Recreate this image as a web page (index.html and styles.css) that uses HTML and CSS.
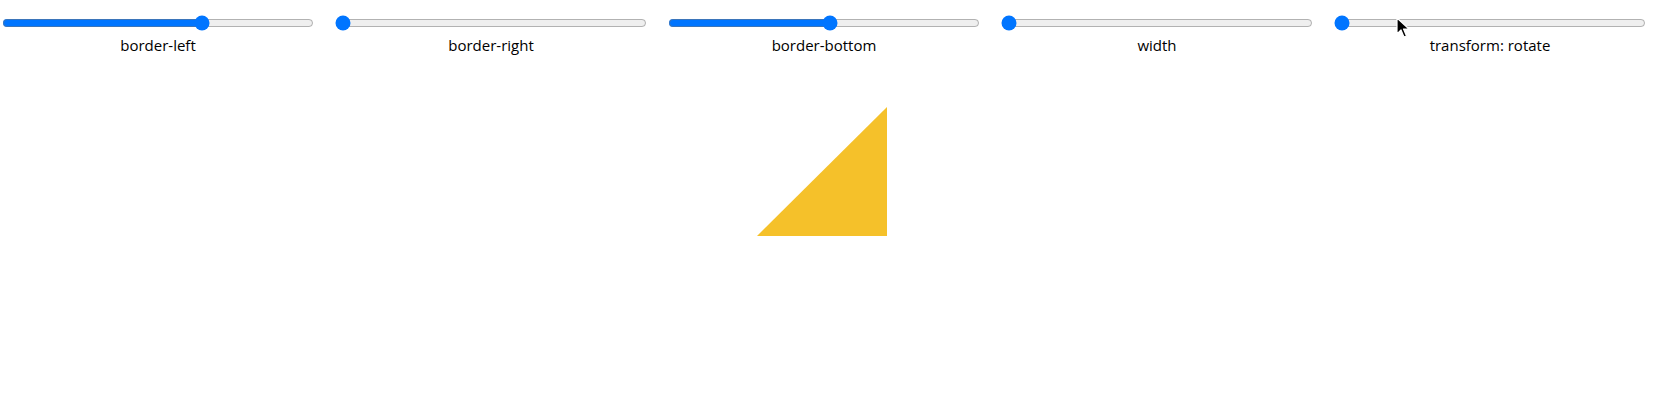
FILE: index.html
```html
<!DOCTYPE html>
<html lang="en">
<head>
  <meta charset="UTF-8" />
  <title>CSS Triangle</title>
  <link rel="stylesheet" href="styles.css">
</head>
<body>

  <div class="controls">
    <div class="control">
      <input type="range" min="0" max="200" value="130" />
      <label>border-left</label>
    </div>
    <div class="control">
      <input type="range" min="0" max="200" value="0" />
      <label>border-right</label>
    </div>
    <div class="control">
      <input type="range" min="0" max="250" value="130" />
      <label>border-bottom</label>
    </div>
    <div class="control">
      <input type="range" min="0" max="200" value="0" />
      <label>width</label>
    </div>
    <div class="control">
      <input type="range" min="0" max="360" value="0" />
      <label>transform: rotate</label>
    </div>
  </div>

  <div class="stage">
    <div class="triangle"></div>
  </div>

  <svg class="cursor" width="14" height="22" viewBox="0 0 14 22">
    <path d="M1 1 L1 17 L5 13 L8 20 L10.5 19 L7.5 12 L13 12 Z" fill="#000" stroke="#fff" stroke-width="1.2" stroke-linejoin="round" />
  </svg>

</body>
</html>
```

FILE: styles.css
```css
body {
  margin: 0;
  padding: 0;
  background-color: #ffffff;
  color: #000;
  font-family: "Open Sans", Arial, sans-serif;
}
.controls {
  display: flex;
  gap: 17px;
  padding-top: 13px;
}
.control {
  width: 316px;
  display: flex;
  flex-direction: column;
  align-items: center;
}
.control input {
  width: 312px;
  margin: 2px;
}
.control label {
  margin-top: 2px;
  font-size: 15px;
  font-weight: 500;
  line-height: 20px;
}
.stage {
  display: flex;
  justify-content: center;
  margin-top: 52px;
  padding-right: 10px;
}
.triangle {
  width: 0;
  height: 0;
  border-left: 130px solid transparent;
  border-right: 0 solid transparent;
  border-bottom: 129px solid #f5c12a;
}
.cursor {
  position: absolute;
  left: 1396px;
  top: 17px;
}
```
